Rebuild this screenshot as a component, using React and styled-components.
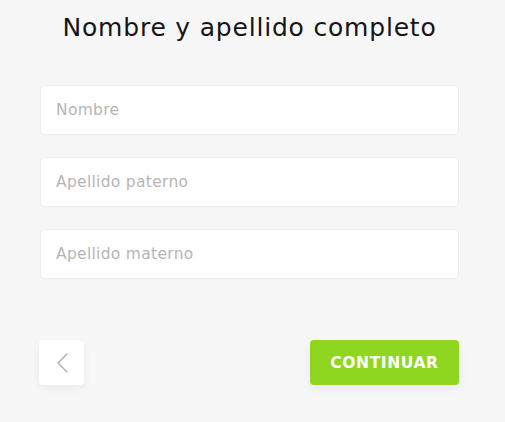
import React from "react";
import styled, { createGlobalStyle } from "styled-components";

const GlobalStyle = createGlobalStyle`
  html, body {
    margin: 0;
    padding: 0;
    background: #f7f7f8;
  }
  * {
    box-sizing: border-box;
  }
`;

const Page = styled.div`
  width: 505px;
  height: 422px;
  padding: 8px 46px 0 39px;
  font-family: "DejaVu Sans", "Noto Sans", sans-serif;
  display: flex;
  flex-direction: column;
`;

const Title = styled.h1`
  margin: 1px 0 0 1px;
  font-size: 25px;
  font-weight: 400;
  line-height: 38px;
  color: #151515;
  text-align: center;
  letter-spacing: 0.8px;
`;

const Fields = styled.div`
  display: flex;
  flex-direction: column;
  gap: 22px;
  margin: 38px 0 0 1px;
`;

const Input = styled.input`
  height: 50px;
  width: 100%;
  border: 1px solid #ececec;
  border-radius: 4px;
  background: #fff;
  padding: 0 15px;
  font-family: inherit;
  font-size: 15.5px;
  letter-spacing: 0.3px;
  color: #333;
  outline: none;

  &::placeholder {
    color: #b5b5b5;
  }
`;

const Actions = styled.div`
  display: flex;
  justify-content: space-between;
  align-items: center;
  margin-top: 61px;
`;

const BackButton = styled.button`
  width: 45px;
  height: 45px;
  border: none;
  border-radius: 4px;
  background: #fff;
  box-shadow: 0 3px 8px rgba(0, 0, 0, 0.06);
  display: flex;
  align-items: center;
  justify-content: center;
  padding: 0;
  cursor: pointer;
`;

const ContinueButton = styled.button`
  width: 149px;
  height: 45px;
  border: none;
  border-radius: 4px;
  background: #8ed61f;
  color: #fff;
  font-family: inherit;
  font-size: 15.5px;
  font-weight: 700;
  letter-spacing: 0.6px;
  box-shadow: 0 4px 10px rgba(120, 40, 140, 0.08);
  cursor: pointer;
`;

const App = () => (
  <>
    <GlobalStyle />
    <Page>
      <Title>Nombre y apellido completo</Title>
      <Fields>
        <Input placeholder="Nombre" />
        <Input placeholder="Apellido paterno" />
        <Input placeholder="Apellido materno" />
      </Fields>
      <Actions>
        <BackButton aria-label="Volver">
          <svg width="14" height="22" viewBox="0 0 14 22" fill="none">
            <path d="M12 2 L3 11 L12 20" stroke="#ababab" strokeWidth="1.4" strokeLinecap="round" strokeLinejoin="round" />
          </svg>
        </BackButton>
        <ContinueButton>CONTINUAR</ContinueButton>
      </Actions>
    </Page>
  </>
);

export default App;
